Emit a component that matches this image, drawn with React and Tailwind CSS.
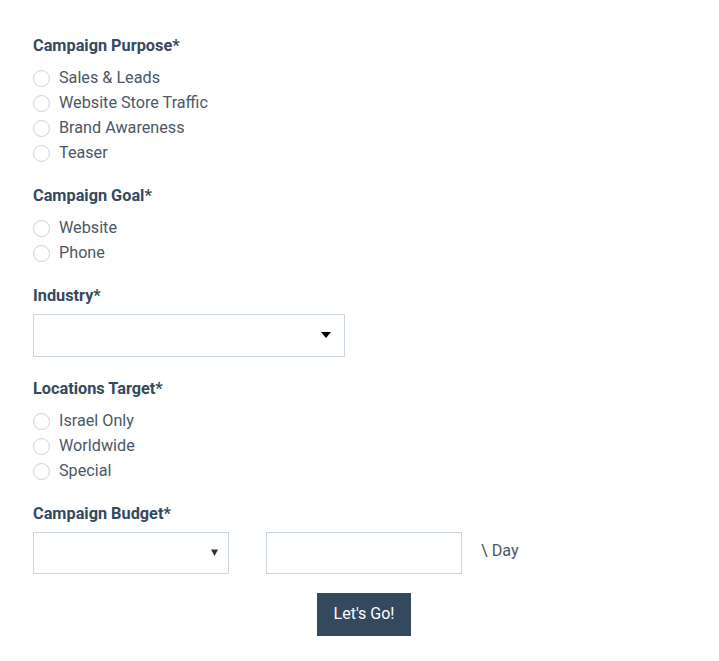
const purposes = ['Sales & Leads', 'Website Store Traffic', 'Brand Awareness', 'Teaser'];
const goals = ['Website', 'Phone'];
const locations = ['Israel Only', 'Worldwide', 'Special'];

function Label({ children, tight }) {
  return (
    <p className={tight ? 'h-5 text-[16.3px] leading-5 font-bold text-[#34495e] mb-[7.5px]' : 'h-5 text-[16.3px] leading-5 font-bold text-[#34495e] mb-[9.5px]'}>
      {children}
    </p>
  );
}

function RadioList({ name, options }) {
  return (
    <div className="flex flex-col">
      {options.map((opt) => (
        <label key={opt} className="flex h-[25px] items-center">
          <input type="radio" name={name} className="peer sr-only" />
          <span className="h-[17px] w-[17px] shrink-0 rounded-full border border-[#c6d3df] bg-white" />
          <span className="ml-[9px] text-[16.2px] text-[#4b5866]">{opt}</span>
        </label>
      ))}
    </div>
  );
}

export default function App() {
  return (
    <div className="min-h-[661px] bg-white pl-[33px] pt-[36px] font-['Roboto',sans-serif]">
      <form className="flex w-[662px] flex-col gap-[20.5px]">
        <div>
          <Label>Campaign Purpose*</Label>
          <RadioList name="purpose" options={purposes} />
        </div>
        <div>
          <Label>Campaign Goal*</Label>
          <RadioList name="goal" options={goals} />
        </div>
        <div>
          <Label tight>Industry*</Label>
          <div className="mb-[2px] flex h-[43px] w-[312px] items-center justify-end border border-[#c9d6e2] bg-white pr-[13px]">
            <svg width="10" height="6" viewBox="0 0 10 6">
              <path d="M0 0h10L5 6z" fill="#000" />
            </svg>
          </div>
        </div>
        <div>
          <Label>Locations Target*</Label>
          <RadioList name="location" options={locations} />
        </div>
        <div>
          <Label tight>Campaign Budget*</Label>
          <div className="flex items-center">
            <div className="flex h-[42px] w-[196px] items-center justify-end border border-[#c9d6e2] bg-white pr-[10px]">
              <svg width="7" height="7" viewBox="0 0 7 7">
                <path d="M0 0.5h7L3.5 7z" fill="#333" />
              </svg>
            </div>
            <input className="ml-[37px] h-[42px] w-[196px] border border-[#c9d6e2] bg-white outline-none" />
            <span className="ml-[19px] pb-[2px] text-[16.2px] text-[#4b5866]">\ Day</span>
          </div>
          <div className="mt-[19px] flex justify-center">
            <button type="button" className="h-[43px] w-[94px] bg-[#34495e] text-[16px] text-white">
              Let's Go!
            </button>
          </div>
        </div>
      </form>
    </div>
  );
}
